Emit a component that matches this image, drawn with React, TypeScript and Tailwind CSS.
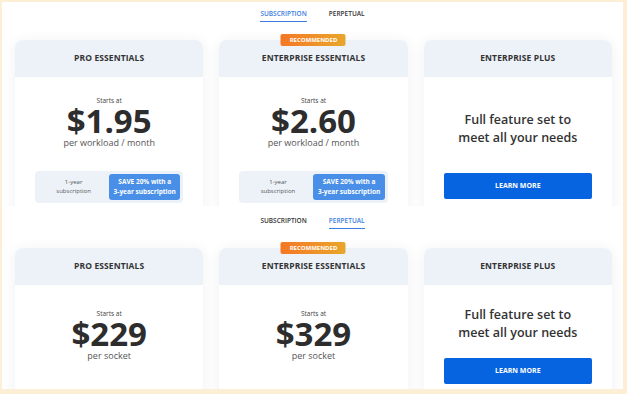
import { ReactNode } from "react";

type Mode = "subscription" | "perpetual";

interface Plan {
    name: string,
    recommended?: boolean,
    sub?: string,
    perp?: string
}

const plans: Plan[] = [
    { name: "PRO ESSENTIALS", sub: "$1.95", perp: "$229" },
    { name: "ENTERPRISE ESSENTIALS", sub: "$2.60", perp: "$329", recommended: true },
    { name: "ENTERPRISE PLUS" },
]

const Tab = ({ active, children }: { active: boolean, children: ReactNode }) => (
    <div className={`text-[6.5px] leading-[10px] font-semibold pb-[2px] border-b-[1.5px] ${active ? "text-[#3b7de0] border-[#3b7de0]" : "text-[#333] border-transparent"}`}>
        {children}
    </div>
)

const PlanCard = ({ plan, mode }: { plan: Plan, mode: Mode }) => {
    const sub = mode == "subscription";
    const price = sub ? plan.sub : plan.perp;

    return (
        <div className="relative flex flex-col bg-white rounded-t-[8px] shadow-[0_2px_14px_rgba(30,40,70,0.07)] h-[400px]">
            {plan.recommended &&
                <div className="absolute left-1/2 -translate-x-1/2 -top-[6px] w-[65px] h-[12px] rounded-[2px] bg-gradient-to-r from-[#f57724] to-[#e8a62c] text-white text-[6px] font-bold flex items-center justify-center">
                    RECOMMENDED
                </div>
            }
            <div className="h-[37px] bg-[#edf2f9] rounded-t-[8px] flex items-center justify-center text-[8.5px] font-bold text-[#333] tracking-[0.1px]">
                {plan.name}
            </div>
            {price ?
                <div className={`flex flex-col items-center ${sub ? "pt-[19px]" : "pt-[24px]"}`}>
                    <div className="text-[6.5px] leading-[9px] text-[#444]">Starts at</div>
                    <div className="mt-[1.5px] text-[33px] leading-[28px] font-bold text-[#2d2d2d]">{price}</div>
                    <div className="mt-[2px] text-[9px] leading-[12px] text-[#555]">
                        {sub ? "per workload / month" : "per socket"}
                    </div>
                    {sub &&
                        <div className="mt-[22px] self-stretch mx-[20px] h-[32px] bg-[#edf2f9] rounded-[4px] p-[3px] grid grid-cols-2">
                            <div className="flex items-center justify-center text-center text-[6px] leading-[9px] text-[#555]">
                                1-year<br />subscription
                            </div>
                            <div className="flex items-center justify-center text-center text-[6.5px] leading-[10px] font-bold text-white bg-[#4a8fe7] rounded-[3px]">
                                SAVE 20% with a<br />3-year subscription
                            </div>
                        </div>
                    }
                </div> :
                <div className={`flex flex-col items-center ${sub ? "pt-[34px]" : "pt-[21px]"}`}>
                    <div className="text-[12.5px] leading-[18px] font-semibold text-[#333] text-center">
                        Full feature set to<br />meet all your needs
                    </div>
                    <button className={`self-stretch mx-[20px] h-[26px] bg-[#0764e0] rounded-[2px] text-white text-[7px] font-bold ${sub ? "mt-[26px]" : "mt-[16px]"}`}>
                        LEARN MORE
                    </button>
                </div>
            }
        </div>
    )
}

const PricingSection = ({ mode, className }: { mode: Mode, className: string }) => (
    <div className={`overflow-hidden ${className}`}>
        <div className="flex justify-center gap-[22px]">
            <Tab active={mode == "subscription"}>SUBSCRIPTION</Tab>
            <Tab active={mode == "perpetual"}>PERPETUAL</Tab>
        </div>
        <div className={`grid grid-cols-3 gap-[16px] pl-[13px] pr-[11px] ${mode == "subscription" ? "mt-[18px]" : "mt-[19px]"}`}>
            {plans.map((p) => <PlanCard key={p.name} plan={p} mode={mode} />)}
        </div>
    </div>
)

export default function App() {
    return (
        <div className="w-[627px] h-[394px] bg-[#fdefd6] pt-[2px] pl-[2px] pr-[4px] pb-[5px] font-['Open_Sans',sans-serif]">
            <div className="h-full bg-white flex flex-col">
                <PricingSection mode="subscription" className="h-[204px] pt-[7px]" />
                <PricingSection mode="perpetual" className="h-[183px] pt-[10px]" />
            </div>
        </div>
    )
}
